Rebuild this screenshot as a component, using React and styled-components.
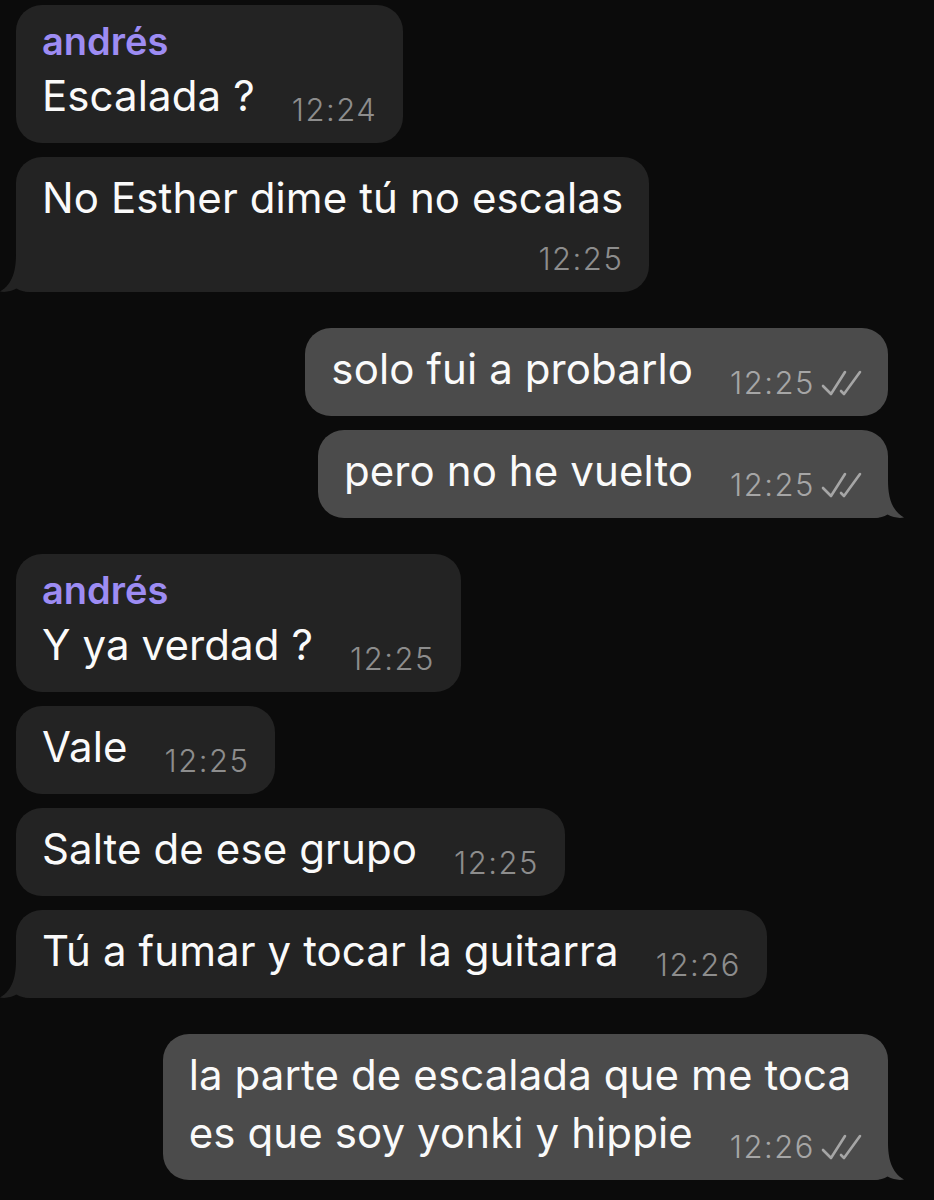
import React from 'react';
import styled, { createGlobalStyle } from 'styled-components';

const GlobalStyle = createGlobalStyle`
    html, body {
        margin: 0;
        padding: 0;
        background: #0b0b0b;
    }
    body {
        font-family: Inter, "Noto Sans", sans-serif;
        -webkit-font-smoothing: antialiased;
    }
`;

const Chat = styled.div`
    display: flex;
    flex-direction: column;
    gap: 36px;
    width: 934px;
    min-height: 1200px;
    padding: 5px 46px 0 16px;
    box-sizing: border-box;
    background: #0b0b0b;
`;

const Group = styled.div`
    display: flex;
    flex-direction: column;
    align-items: ${props => (props.$out ? 'flex-end' : 'flex-start')};
    gap: 14px;
`;

const Bubble = styled.div`
    position: relative;
    display: flow-root;
    max-width: 780px;
    padding: 12px 26px 18px;
    box-sizing: border-box;
    border-radius: 26px;
    background: ${props => (props.$out ? '#4b4b4b' : '#232323')};
    color: #fafafa;
    ${props => props.$tail && !props.$out && 'border-bottom-left-radius: 14px;'}
    ${props => props.$tail && props.$out && 'border-bottom-right-radius: 14px;'}
`;

const Name = styled.div`
    margin: 2px 0 4px;
    font-size: 38px;
    line-height: 44px;
    font-weight: 600;
    color: #9d8cf3;
`;

const Text = styled.div`
    font-size: 42px;
    line-height: 58px;
    font-weight: 400;
    letter-spacing: 0.1px;
    white-space: nowrap;
`;

const Meta = styled.span`
    display: flex;
    align-items: center;
    gap: 5px;
    float: right;
    margin: 28px 0 0 37px;
    height: 30px;
    font-size: 31px;
    line-height: 30px;
    font-weight: 300;
    letter-spacing: 1.5px;
    color: ${props => (props.$out ? '#a6a6a6' : '#8d8d8d')};
`;

const StackedMeta = styled(Meta)`
    float: none;
    justify-content: flex-end;
    margin: 17px 0 0 0;
`;

const TailSvg = styled.svg`
    position: absolute;
    bottom: 0;
    ${props => (props.$out ? 'right: -16px; transform: scaleX(-1);' : 'left: -16px;')}
`;

const Tail = ({ out, color }) => (
    <TailSvg $out={out} width="30" height="38" viewBox="0 0 30 38">
        <path
            d="M16 0 C16 16 13 30 0 37.5 C5 38.5 11 37.6 16.5 34.6 C20 36.8 24 38 30 38 L30 0 Z"
            fill={color}
        />
    </TailSvg>
);

const Checks = () => (
    <svg width="42" height="28" viewBox="0 0 42 28" fill="none">
        <path d="M3 17 L11 25 L25 3" stroke="currentColor" strokeWidth="2.6" strokeLinecap="round" strokeLinejoin="round" />
        <path d="M21 22 L24 25 L40 3" stroke="currentColor" strokeWidth="2.6" strokeLinecap="round" strokeLinejoin="round" />
    </svg>
);

const Message = ({ msg, out }) => {
    const MetaPart = msg.stacked ? StackedMeta : Meta;
    const meta = (
        <MetaPart $out={out}>
            <span>{msg.time}</span>
            {out && <Checks />}
        </MetaPart>
    );
    return (
        <Bubble $out={out} $tail={msg.tail}>
            {msg.name && <Name>{msg.name}</Name>}
            <Text>
                {msg.lines.map((line, i) => (
                    <React.Fragment key={i}>
                        {i > 0 && <br />}
                        {line}
                    </React.Fragment>
                ))}
                {!msg.stacked && meta}
            </Text>
            {msg.stacked && meta}
            {msg.tail && <Tail out={out} color={out ? '#4b4b4b' : '#232323'} />}
        </Bubble>
    );
};

const groups = [
    {
        out: false,
        messages: [
            { name: 'andrés', lines: ['Escalada ?'], time: '12:24' },
            { lines: ['No Esther dime tú no escalas'], time: '12:25', stacked: true, tail: true },
        ],
    },
    {
        out: true,
        messages: [
            { lines: ['solo fui a probarlo'], time: '12:25' },
            { lines: ['pero no he vuelto'], time: '12:25', tail: true },
        ],
    },
    {
        out: false,
        messages: [
            { name: 'andrés', lines: ['Y ya verdad ?'], time: '12:25' },
            { lines: ['Vale'], time: '12:25' },
            { lines: ['Salte de ese grupo'], time: '12:25' },
            { lines: ['Tú a fumar y tocar la guitarra'], time: '12:26', tail: true },
        ],
    },
    {
        out: true,
        messages: [
            { lines: ['la parte de escalada que me toca', 'es que soy yonki y hippie'], time: '12:26', tail: true },
        ],
    },
];

const App = () => (
    <>
        <GlobalStyle />
        <Chat>
            {groups.map((group, gi) => (
                <Group key={gi} $out={group.out}>
                    {group.messages.map((msg, mi) => (
                        <Message key={mi} msg={msg} out={group.out} />
                    ))}
                </Group>
            ))}
        </Chat>
    </>
);

export default App;
